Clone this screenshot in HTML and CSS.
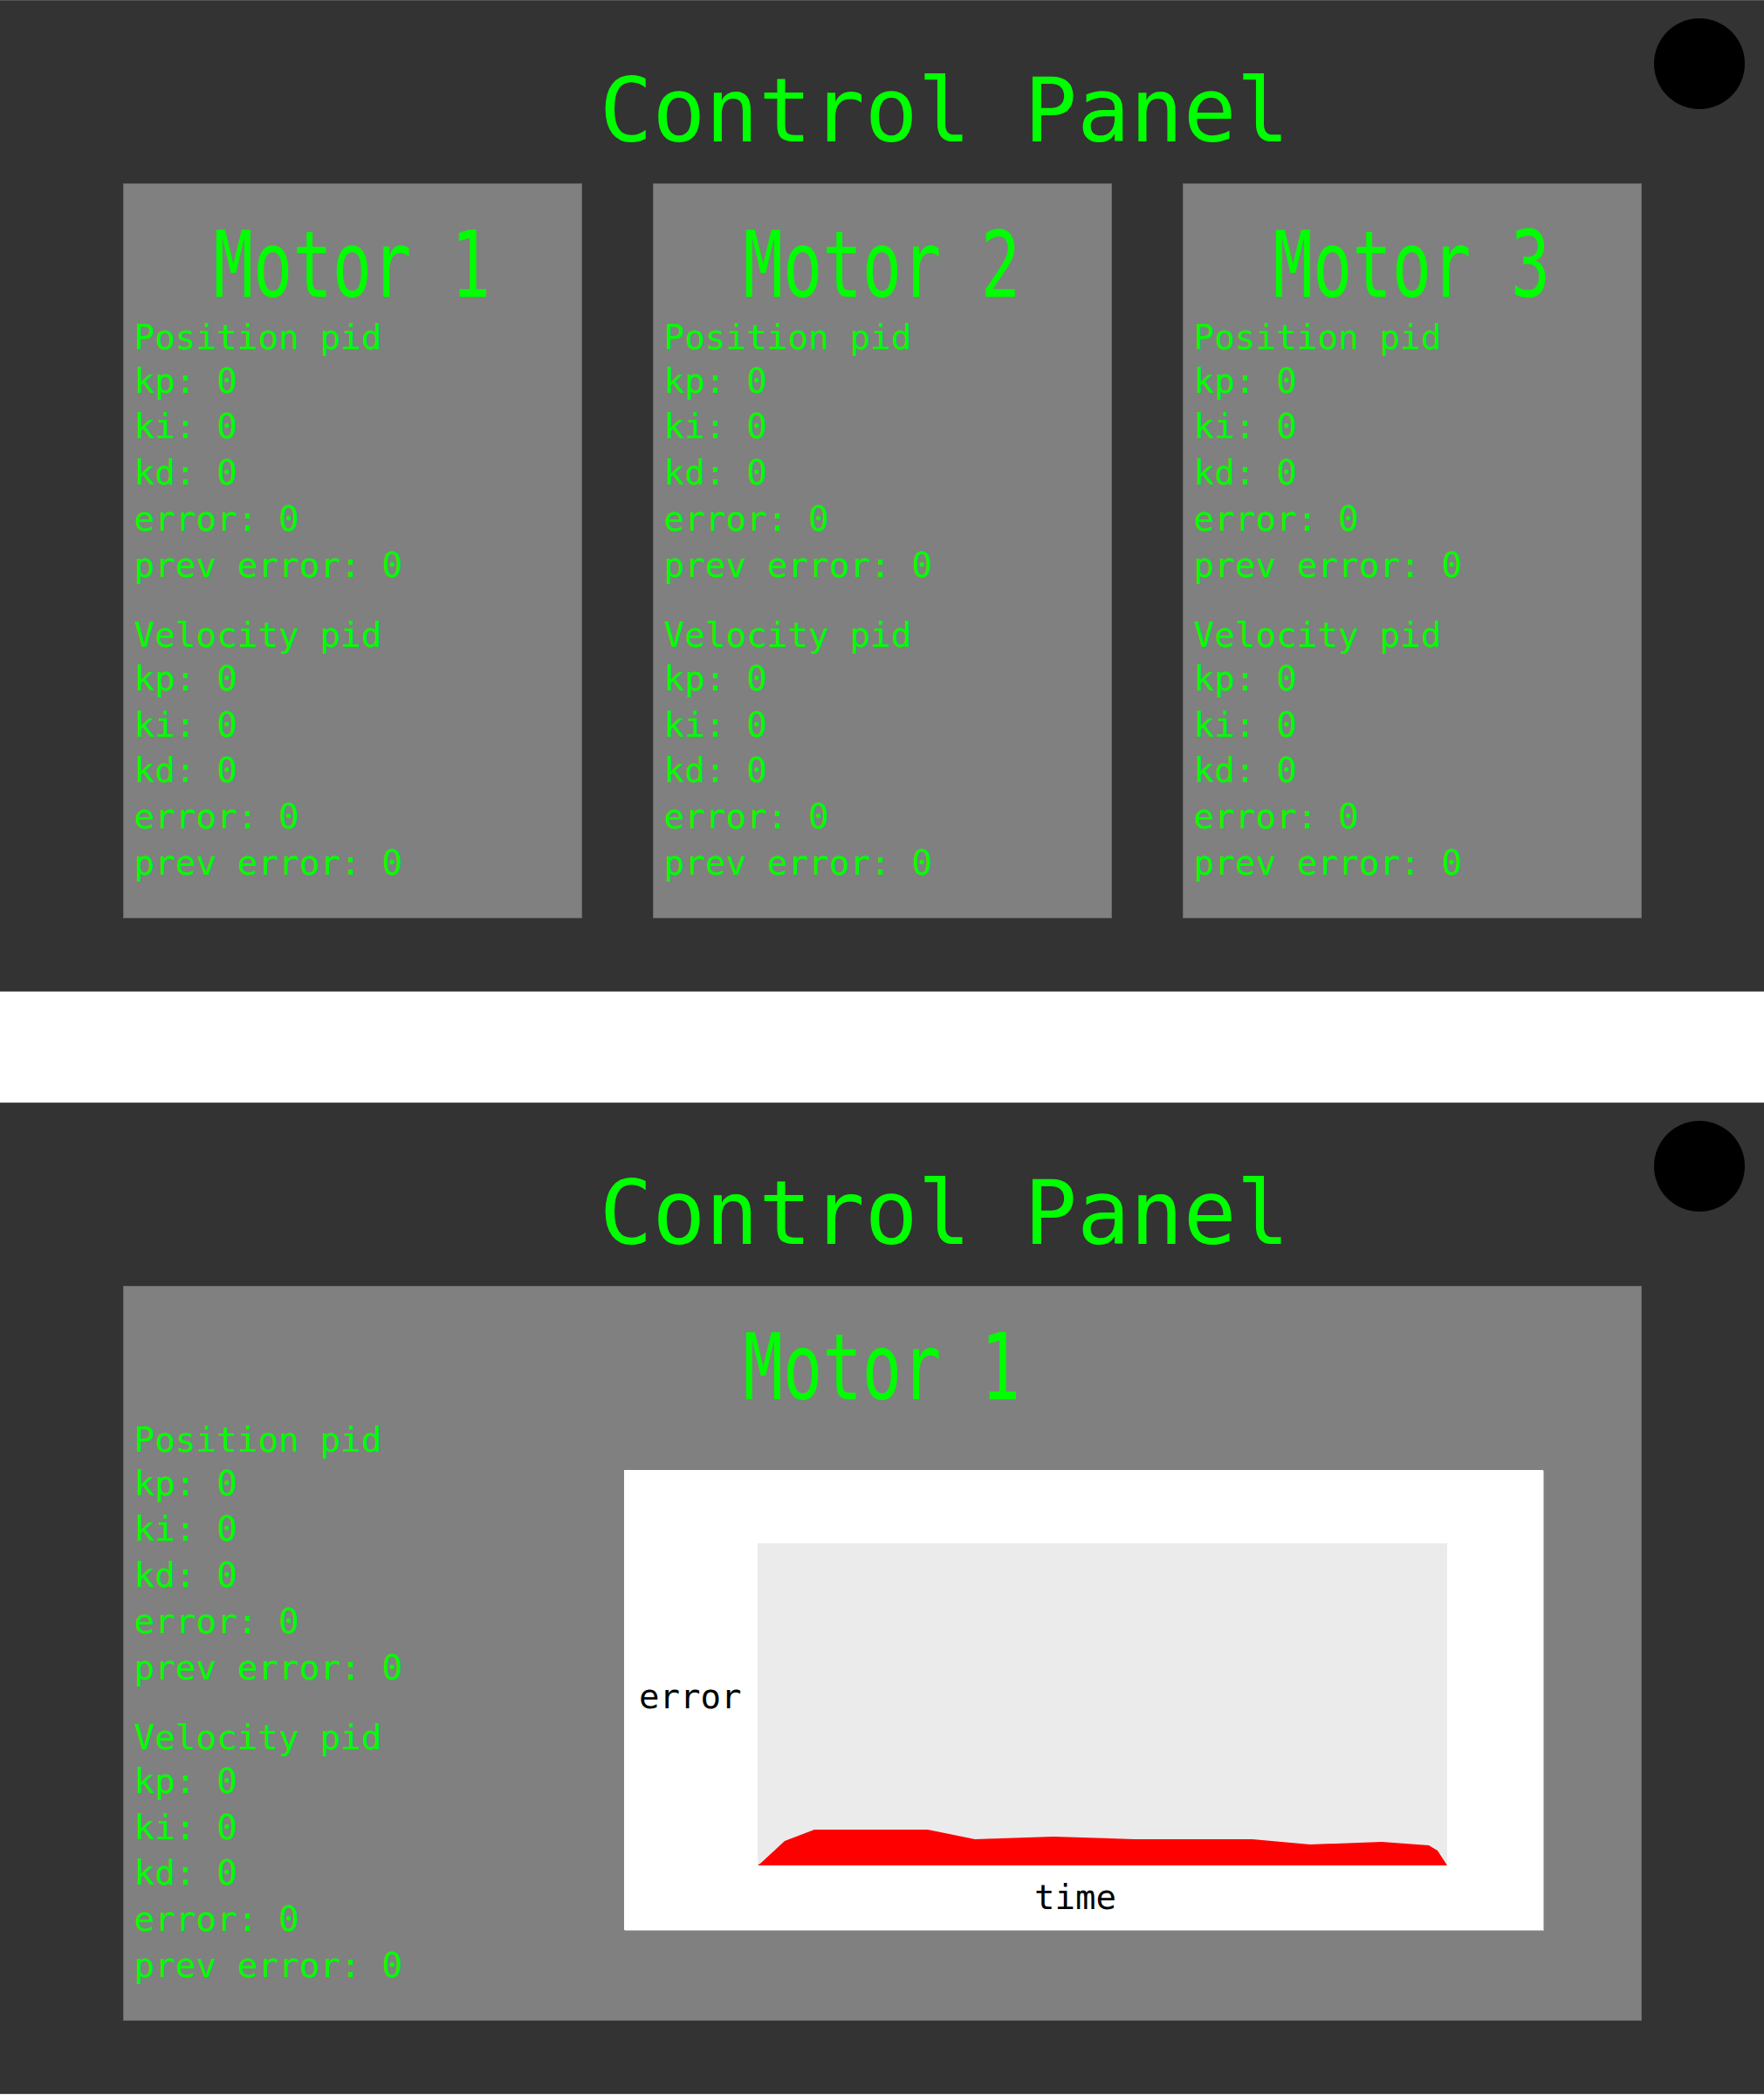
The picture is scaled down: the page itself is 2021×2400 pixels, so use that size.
FILE: index.html
```html
<!doctype html>
<html lang=en>
<head>
<meta charset=utf-8>
<title>Control Panel</title>
<link rel="stylesheet" href="styles.css">
</head>
<body>

<!-- overview: all three motors -->

<section class="panel">
	<header class="panel-head">
		<h1 class="panel-title">Control Panel</h1>
		<div class="status-dot"></div>
	</header>

	<div class="motors">
		<article class="motor">
			<h2 class="motor-name"><span>Motor 1</span></h2>
			<div class="pid">
				<p class="pid-title">Position pid</p>
				<p>kp: 0</p>
				<p>ki: 0</p>
				<p>kd: 0</p>
				<p>error: 0</p>
				<p>prev error: 0</p>
			</div>
			<div class="pid">
				<p class="pid-title">Velocity pid</p>
				<p>kp: 0</p>
				<p>ki: 0</p>
				<p>kd: 0</p>
				<p>error: 0</p>
				<p>prev error: 0</p>
			</div>
		</article>

		<article class="motor">
			<h2 class="motor-name"><span>Motor 2</span></h2>
			<div class="pid">
				<p class="pid-title">Position pid</p>
				<p>kp: 0</p>
				<p>ki: 0</p>
				<p>kd: 0</p>
				<p>error: 0</p>
				<p>prev error: 0</p>
			</div>
			<div class="pid">
				<p class="pid-title">Velocity pid</p>
				<p>kp: 0</p>
				<p>ki: 0</p>
				<p>kd: 0</p>
				<p>error: 0</p>
				<p>prev error: 0</p>
			</div>
		</article>

		<article class="motor">
			<h2 class="motor-name"><span>Motor 3</span></h2>
			<div class="pid">
				<p class="pid-title">Position pid</p>
				<p>kp: 0</p>
				<p>ki: 0</p>
				<p>kd: 0</p>
				<p>error: 0</p>
				<p>prev error: 0</p>
			</div>
			<div class="pid">
				<p class="pid-title">Velocity pid</p>
				<p>kp: 0</p>
				<p>ki: 0</p>
				<p>kd: 0</p>
				<p>error: 0</p>
				<p>prev error: 0</p>
			</div>
		</article>
	</div>
</section>


<!-- detail: one motor with its error graph -->

<section class="panel">
	<header class="panel-head">
		<h1 class="panel-title">Control Panel</h1>
		<div class="status-dot"></div>
	</header>

	<article class="motor motor-wide">
		<h2 class="motor-name"><span>Motor 1</span></h2>
		<div class="motor-body">
			<div class="pids">
				<div class="pid">
					<p class="pid-title">Position pid</p>
					<p>kp: 0</p>
					<p>ki: 0</p>
					<p>kd: 0</p>
					<p>error: 0</p>
					<p>prev error: 0</p>
				</div>
				<div class="pid">
					<p class="pid-title">Velocity pid</p>
					<p>kp: 0</p>
					<p>ki: 0</p>
					<p>kd: 0</p>
					<p>error: 0</p>
					<p>prev error: 0</p>
				</div>
			</div>

			<svg class="chart" width="1053" height="527" viewBox="0 0 1053 527">
				<rect class="plot" x="153" y="84" width="790" height="369"/>
				<polygon class="area" points="153,453 157,450 184,425 218,412 348,412 402,423 492,420 585,423 720,423 786,429 868,426 922,430 932,436 943,453"/>
				<text class="axis" x="17" y="273">error</text>
				<text class="axis" x="470" y="503">time</text>
			</svg>
		</div>
	</article>
</section>

</body>
</html>
```

FILE: styles.css
```css
/* ====  Base  ==== */

* {
	box-sizing: border-box;
}

body {
	margin:      0;
	background:  white;
	color:       #00ff00;
	font-family: "DejaVu Sans Mono", "Liberation Mono", monospace;
}

h1, h2, p {
	margin:      0;
	font-weight: normal;
}


/* ====  Panel  ==== */

.panel {
	background:     #333333;
	border-top:     1px solid #555555;
	border-bottom:  1px solid #555555;
	padding-bottom: 83px;
}

.panel + .panel {
	margin-top: 127px;
}

.panel-head {
	display:      flex;
	align-items:  flex-start;
	padding-left: 269px;
}

.panel-title {
	flex:        1;
	margin-top:  66px;
	text-align:  center;
	font-size:   101px;
	line-height: 120px;
}

.status-dot {
	width:         104px;
	height:        104px;
	border-radius: 50%;
	background:    black;
	margin:        20px 22px 0 0;
}


/* ====  Motor cards  ==== */

.motors {
	display:               grid;
	grid-template-columns: repeat(3, 526px);
	gap:                   81px;
	justify-content:       center;
	margin-top:            23px;
}

.motor {
	height:     842px;
	background: #808080;
	border:     1px solid #6b6b6b;
	padding:    33px 12px 0;
}

.motor-wide {
	width:  1740px;
	margin: 23px auto 0;
}

.motor-name {
	text-align:  center;
	font-size:   106px;
	line-height: 119px;
}

/* headings are drawn narrower than the font */
.motor-name span {
	display:   inline-block;
	transform: scaleX(0.71);
}

.pid p {
	font-size:   39.3px;
	line-height: 52.75px;
}

.pid .pid-title {
	line-height: 47.5px;
}

.pid + .pid {
	margin-top: 30px;
}


/* ====  Detail view with graph  ==== */

.motor-body {
	display:     flex;
	align-items: flex-start;
}

.pids {
	width: 561px;
}

.chart {
	display:    block;
	margin-top: 58px;
	background: white;
	box-shadow: 1px 1px 0 #bdbdbd;
}

.chart .plot {
	fill: #ebebeb;
}

.chart .area {
	fill: #ff0000;
}

.chart .axis {
	fill:        black;
	font-family: "DejaVu Sans Mono", monospace;
	font-size:   39px;
}
```
